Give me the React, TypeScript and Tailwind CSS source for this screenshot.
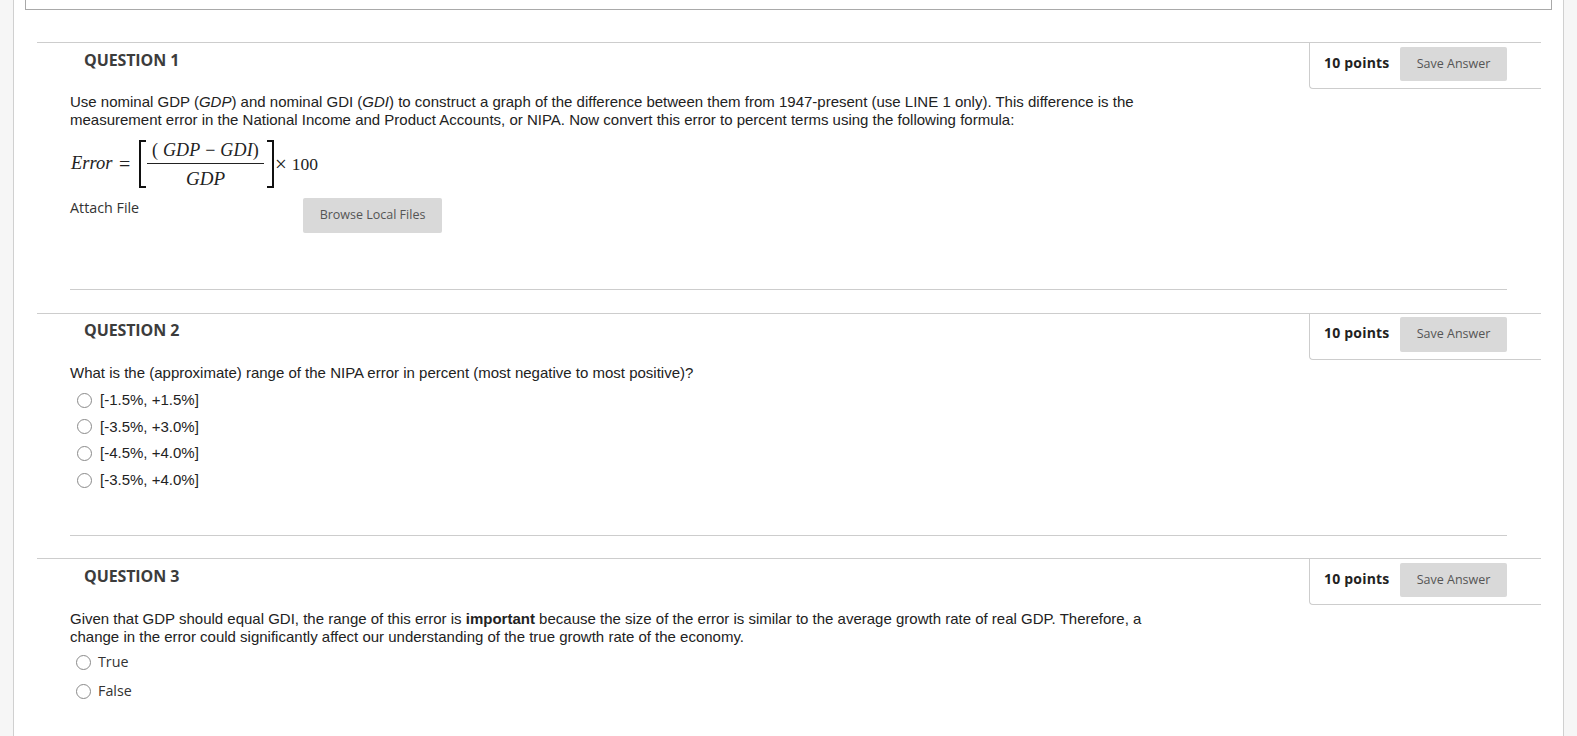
const OPEN = "font-['Open_Sans',sans-serif]";
const ARIAL = "font-['Liberation_Sans',Arial,sans-serif]";
const SERIF = "font-['Liberation_Serif','Times_New_Roman',serif]";

function QuestionHeader({ n, tight }: { n: number; tight?: boolean }) {
  return (
    <div className="flex h-[47px] items-start justify-between border-t border-[#cdcdcd]">
      <h2
        className={`${OPEN} ml-[47px] text-base leading-[22px] font-bold tracking-[-0.1px] text-[#3c3c3c] ${tight ? "mt-[5px]" : "mt-[6px]"}`}
      >
        QUESTION {n}
      </h2>
      <div
        className={`flex h-[46px] w-[232px] items-start rounded-bl-[4px] border-b border-l border-[#cdcdcd] pl-[14px] ${tight ? "pt-[3px]" : "pt-[4px]"}`}
      >
        <span className={`${OPEN} mt-[6px] w-[76px] text-sm leading-[20px] font-bold tracking-[0.2px] text-[#222]`}>
          10 points
        </span>
        <button
          className={`${OPEN} w-[107px] rounded-[2px] bg-[#d9d9d9] text-[12.5px] text-[#555] ${tight ? "h-[35px]" : "h-[34px]"}`}
        >
          Save Answer
        </button>
      </div>
    </div>
  );
}

function Radio() {
  return <span className="block size-[15px] shrink-0 rounded-full border-[1.5px] border-[#8a8a8a] bg-white" />;
}

function Option({ label, open }: { label: string; open?: boolean }) {
  return (
    <div className="flex items-center">
      <Radio />
      <span
        className={
          open
            ? `${OPEN} ml-[7px] text-[14.3px] leading-[18px] text-[#333]`
            : `${ARIAL} ml-[8px] text-[15px] leading-[18px] text-[#222]`
        }
      >
        {label}
      </span>
    </div>
  );
}

function Bracket({ side }: { side: "l" | "r" }) {
  return (
    <span
      className={
        side === "l"
          ? "block h-[48px] w-[7px] border-y-2 border-l-2 border-[#111]"
          : "block h-[48px] w-[7px] border-y-2 border-r-2 border-[#111]"
      }
    />
  );
}

function Formula() {
  return (
    <div className={`${SERIF} ml-[1px] mt-[11px] flex h-[48px] items-center text-[#222]`}>
      <span className="w-[48px] text-[18.5px] italic">Error</span>
      <span className="w-[20px] text-[20px]">=</span>
      <Bracket side="l" />
      <div className="ml-[1px] flex w-[117px] flex-col items-center">
        <span className="pb-[3px] text-lg leading-[20px] tracking-[0.2px]">
          ( <i>GDP</i> − <i>GDI</i>)
        </span>
        <span className="block h-[1px] w-full bg-[#222]" />
        <span className="pt-[5px] text-[19px] leading-[20px]"><i>GDP</i></span>
      </div>
      <span className="ml-[3px]"><Bracket side="r" /></span>
      <span className="ml-[1px] text-[21px] leading-none">×</span>
      <span className="ml-[5px] text-[17.5px]">100</span>
    </div>
  );
}

export default function App() {
  return (
    <div className="h-[736px] overflow-hidden bg-[#f6f6f6] px-[13px]">
      <main className="h-full border-x border-[#d0d0d0] bg-white">
        <div className="mx-[11px] h-[10px] border-x border-b border-[#a9a9a9]" />

        {/* question 1 */}
        <section className="ml-[23px] mr-[22px] mt-[32px]">
          <QuestionHeader n={1} />
          <div className="pl-[33px]">
            <p className={`${ARIAL} mt-[4px] w-[1080px] text-[15px] leading-[18px] text-[#222]`}>
              Use nominal GDP (<i>GDP</i>) and nominal GDI (<i>GDI</i>) to construct a graph of the difference between them from 1947-present (use LINE 1 only). This difference is the measurement error in the National Income and Product Accounts, or NIPA. Now convert this error to percent terms using the following formula:
            </p>
            <Formula />
            <div className="mt-[10px] flex items-start">
              <span className={`${OPEN} mt-[1px] w-[233px] text-[14.3px] leading-[18px] text-[#333]`}>Attach File</span>
              <button className={`${OPEN} h-[35px] w-[139px] rounded-[2px] bg-[#d9d9d9] text-[12.5px] text-[#555]`}>
                Browse Local Files
              </button>
            </div>
            <div className="mr-[34px] mt-[56px] h-px bg-[#cdcdcd]" />
          </div>
        </section>

        {/* question 2 */}
        <section className="ml-[23px] mr-[22px] mt-[23px]">
          <QuestionHeader n={2} tight />
          <div className="pl-[33px]">
            <p className={`${ARIAL} mt-[4px] text-[15px] leading-[18px] text-[#222]`}>
              What is the (approximate) range of the NIPA error in percent (most negative to most positive)?
            </p>
            <div className="ml-[7px] mt-[9px] flex flex-col gap-[8.7px]">
              <Option label="[-1.5%, +1.5%]" />
              <Option label="[-3.5%, +3.0%]" />
              <Option label="[-4.5%, +4.0%]" />
              <Option label="[-3.5%, +4.0%]" />
            </div>
            <div className="mr-[34px] mt-[46px] h-px bg-[#cdcdcd]" />
          </div>
        </section>

        {/* question 3 */}
        <section className="ml-[23px] mr-[22px] mt-[22px]">
          <QuestionHeader n={3} />
          <div className="pl-[33px]">
            <p className={`${ARIAL} mt-[5px] w-[1080px] text-[15px] leading-[18px] text-[#222]`}>
              Given that GDP should equal GDI, the range of this error is <b>important</b> because the size of the error is similar to the average growth rate of real GDP. Therefore, a change in the error could significantly affect our understanding of the true growth rate of the economy.
            </p>
            <div className="ml-[6px] mt-[7px] flex flex-col gap-[11px]">
              <Option label="True" open />
              <Option label="False" open />
            </div>
          </div>
        </section>
      </main>
    </div>
  );
}
